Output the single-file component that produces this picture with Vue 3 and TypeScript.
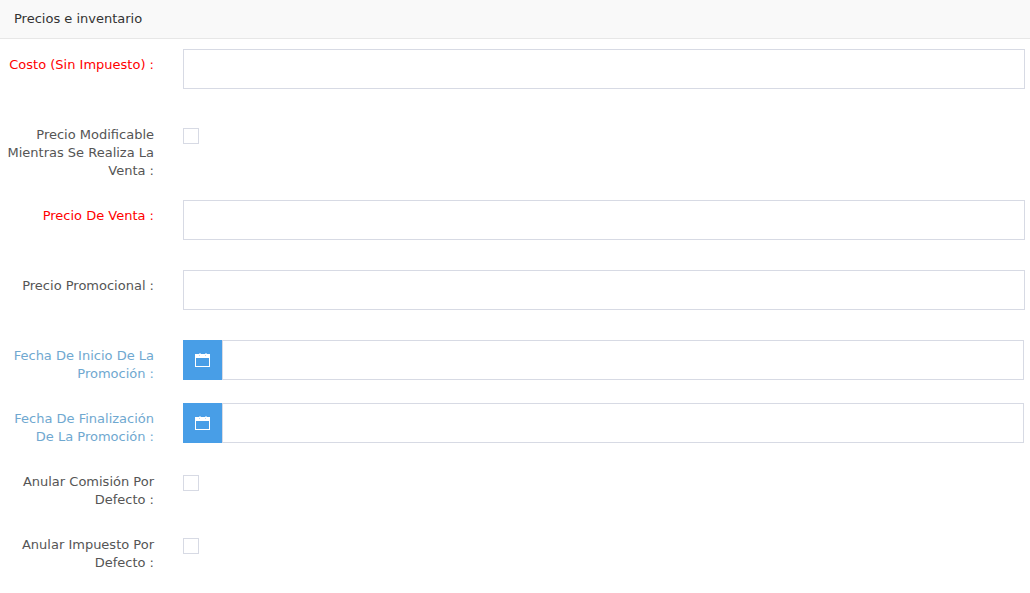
<script setup lang="ts">
import { reactive } from 'vue'

type Field = {
  id: string
  label: string
  kind: 'text' | 'check' | 'date'
  tone?: 'required' | 'info'
}

const fields: Field[] = [
  { id: 'costo', label: 'Costo (Sin Impuesto) :', kind: 'text', tone: 'required' },
  { id: 'modificable', label: 'Precio Modificable\nMientras Se Realiza La\nVenta :', kind: 'check' },
  { id: 'venta', label: 'Precio De Venta :', kind: 'text', tone: 'required' },
  { id: 'promocional', label: 'Precio Promocional :', kind: 'text' },
  { id: 'inicio', label: 'Fecha De Inicio De La\nPromoción :', kind: 'date', tone: 'info' },
  { id: 'fin', label: 'Fecha De Finalización\nDe La Promoción :', kind: 'date', tone: 'info' },
  { id: 'comision', label: 'Anular Comisión Por\nDefecto :', kind: 'check' },
  { id: 'impuesto', label: 'Anular Impuesto Por\nDefecto :', kind: 'check' },
]

const values = reactive<Record<string, string>>({})
const checks = reactive<Record<string, boolean>>({})
</script>

<template>
  <section class="panel">
    <h3 class="heading">Precios e inventario</h3>
    <form class="form" @submit.prevent>
      <div v-for="f in fields" :key="f.id" class="row">
        <label class="label" :class="f.tone" :for="f.id">{{ f.label }}</label>
        <div class="field">
          <input v-if="f.kind === 'text'" :id="f.id" v-model="values[f.id]" class="control" type="text" />
          <input v-else-if="f.kind === 'check'" :id="f.id" v-model="checks[f.id]" class="check" type="checkbox" />
          <div v-else class="group">
            <button class="addon" type="button" aria-label="Abrir calendario">
              <svg width="15" height="14" viewBox="0 0 15 14" aria-hidden="true">
                <path fill="#fff" fill-rule="evenodd" d="M0 1h15v13H0zM1 5v8h13V5z" />
                <path fill="#a5cff4" d="M4 0h2v1H4zM10 0h2v1h-2z" />
                <path fill="#b9dbf7" d="M4 2h1v1H4zM10 2h1v1h-1z" />
              </svg>
            </button>
            <input :id="f.id" v-model="values[f.id]" class="control" type="text" />
          </div>
        </div>
      </div>
    </form>
  </section>
</template>

<style>
body {
  margin: 0;
  background: #fff;
}
</style>

<style scoped>
.panel {
  font-family: "DejaVu Sans", Verdana, sans-serif;
  font-size: 13px;
  line-height: 18px;
  color: #555;
}
.heading {
  margin: 0;
  padding: 10px 14px;
  border-bottom: 1px solid #e7e7e7;
  background: #f9f9f9;
  color: #333;
  font-size: 13px;
  font-weight: 400;
}
.form {
  display: flex;
  flex-direction: column;
  gap: 20px;
  padding: 10px 5px 20px 0;
}
.row {
  display: grid;
  grid-template-columns: 154px minmax(0, 1fr);
  column-gap: 29px;
}
.label {
  padding-top: 7px;
  text-align: right;
  white-space: pre;
}
.required {
  color: #f00;
}
.info {
  color: #6fa8d0;
}
.field {
  display: flex;
  align-items: flex-start;
}
.control {
  box-sizing: border-box;
  flex: 1;
  min-width: 0;
  height: 40px;
  margin: 0 0 10px;
  padding: 6px 10px;
  border: 1px solid #d7dae4;
  border-radius: 0;
  background: #fff;
  color: #555;
  font: inherit;
  outline: none;
}
.control:focus {
  border-color: #489ee7;
}
.group {
  display: flex;
  flex: 1;
  height: 40px;
  padding-right: 1px;
}
.addon {
  display: flex;
  align-items: center;
  justify-content: center;
  width: 39px;
  height: 40px;
  padding: 0;
  border: 0;
  background: #489ee7;
  cursor: pointer;
}
.group .control {
  margin: 0;
}
.check {
  box-sizing: border-box;
  appearance: none;
  width: 16px;
  height: 16px;
  margin: 9px 0 0;
  border: 1px solid #d7dae4;
  background: #fff;
}
.check:checked {
  border-color: #489ee7;
  background: #489ee7;
}
</style>
